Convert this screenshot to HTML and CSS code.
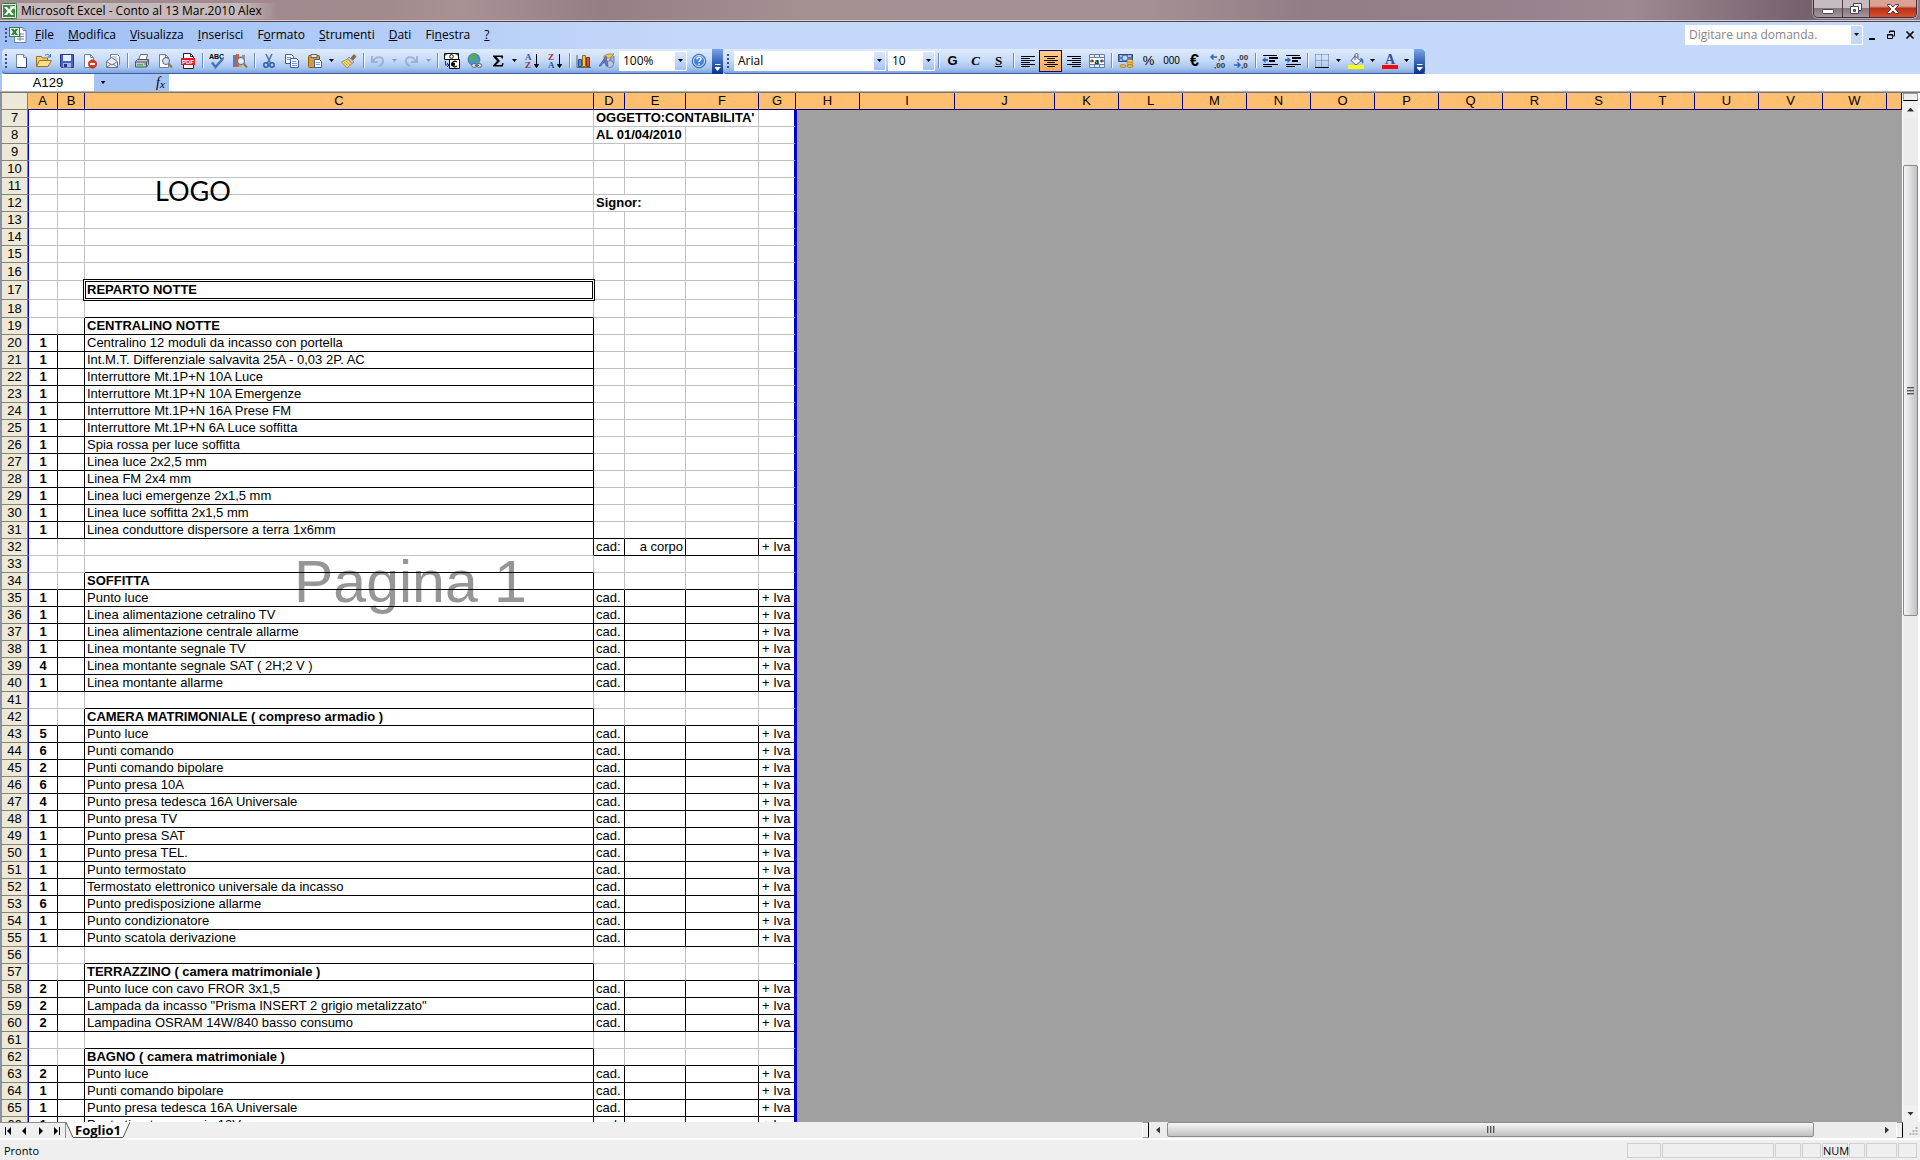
FILE: index.html
```html
<!DOCTYPE html>
<html lang="it">
<head>
<meta charset="utf-8">
<title>Microsoft Excel - Conto al 13 Mar.2010 Alex</title>
<link rel="stylesheet" href="styles.css">
</head>
<body>
<header class="titlebar">
  <svg class="app-icon" viewBox="0 0 16 16"><rect x=".5" y=".5" width="15" height="15" rx="1" fill="#e4f0e0" stroke="#2f7a3a"/><rect x="2" y="2" width="12" height="12" fill="#3c8a44"/><path d="M3 4h3l2 2.500 2-2.500h3L9.500 8l3.500 4h-3L8 9.500 6 12H3l3.500-4z" fill="#fff"/><path d="M9 3h5v3H9z" fill="#b9dcae"/><path d="M9 6l3-3h2l-4 5z" fill="#fff"/></svg>
  <h1>Microsoft Excel - Conto al 13 Mar.2010 Alex</h1>
  <div class="window-buttons">
    <button class="win-min" aria-label="Riduci a icona"><svg width="14" height="12" viewBox="0 0 14 12"><rect x="1.500" y="6.500" width="11" height="4" rx="1" fill="#fff" stroke="#4b4350"/></svg></button>
    <button class="win-restore" aria-label="Ripristina"><svg width="14" height="13" viewBox="0 0 14 13"><path d="M4.500 1.500h8v7h-8z" fill="#eee" stroke="#4b4350"/><path d="M1.500 4.500h8v7h-8z" fill="#fff" stroke="#4b4350"/><path d="M4.500 7.500h2v2h-2z" fill="#8a7d86" stroke="#4b4350"/></svg></button>
    <button class="win-close" aria-label="Chiudi"><svg width="14" height="12" viewBox="0 0 14 12"><path d="M1.500 1.500h3L7 4l2.500-2.500h3v1L9 6l3.500 3.500v1h-3L7 8l-2.500 2.500h-3v-1L5 6 1.500 2.500z" fill="#fff" stroke="#5b3338"/></svg></button>
  </div>
</header>

<nav class="menubar">
  <i class="grip"></i>
  <svg class="doc-icon" viewBox="0 0 18 18"><path d="M7 1.500h7l3 3v12H5.500V9" fill="#fff" stroke="#6782b8"/><path d="M14 1.500v3h3M8 8h7M8 10.500h7M8 13h7M11 7v8" fill="none" stroke="#6782b8"/><rect x=".5" y="1.500" width="10" height="9" fill="#e1f0dc" stroke="#2e7d3b"/><path d="M2 3h2.500l1 1.500L6.500 3H9L6.800 6 9 9H6.500l-1-1.500L4.500 9H2l2.200-3z" fill="#2e7d3b"/></svg>
  <ul class="menus">
    <li><button><u>F</u>ile</button></li><li><button><u>M</u>odifica</button></li><li><button><u>V</u>isualizza</button></li><li><button><u>I</u>nserisci</button></li><li><button>F<u>o</u>rmato</button></li><li><button><u>S</u>trumenti</button></li><li><button><u>D</u>ati</button></li><li><button>Fi<u>n</u>estra</button></li><li><button><u>?</u></button></li>
  </ul>
  <div class="combo ask"><input type="text" placeholder="Digitare una domanda." aria-label="Digitare una domanda"><button aria-label="Elenco domande"><i class="tri"></i></button></div>
  <div class="doc-buttons">
    <button aria-label="Riduci cartella"><svg viewBox="0 0 10 10"><path d="M2 8h6v2H2z"/></svg></button>
    <button aria-label="Ripristina cartella"><svg viewBox="0 0 10 10"><path d="M3.500 3V1h5v5H7M3 1.500h6M1.500 4.500h5v4h-5zM1 5h6" fill="none" stroke="#000"/></svg></button>
    <button aria-label="Chiudi cartella"><svg viewBox="0 0 10 10"><path d="M1.500 1.500l7 7m0-7l-7 7" fill="none" stroke="#000" stroke-width="1.600"/></svg></button>
  </div>
</nav>

<div class="toolbars">
  <div class="toolbar" role="toolbar" aria-label="Standard">
    <i class="grip"></i>
    <button aria-label="Nuovo"><svg viewBox="0 0 16 16"><path d="M3.500 1.500h7l3 3v10h-10z" fill="#fff" stroke="#7186ad"/><path d="M10.500 1.500v3h3" fill="#d5e2f7" stroke="#7186ad"/><path d="M13.500 5v9.500h-10" fill="none" stroke="#2c4370"/></svg></button>
    <button aria-label="Apri"><svg viewBox="0 0 16 16"><path d="M.5 13.500v-10h5l1 1.500h5v3" fill="#f4cf70" stroke="#9c6e1e"/><path d="M.5 13.500l3-6h12l-3.500 6z" fill="#ffe08a" stroke="#9c6e1e"/><path d="M9 2.500c2-2 4-1 5 1M14.500 1v3h-3" fill="none" stroke="#3f64a8"/></svg></button>
    <button aria-label="Salva"><svg viewBox="0 0 16 16"><path d="M1.500 1.500h13v13h-12l-1-1z" fill="#4e5fc4" stroke="#2b3584"/><path d="M4 2h8v6H4z" fill="#e9f0ff"/><path d="M4 10h8v4.500H4z" fill="#a9b6de"/><path d="M5 11h3v3H5z" fill="#2b3584"/></svg></button>
    <button aria-label="Autorizzazione"><svg viewBox="0 0 16 16"><path d="M2.500 1.500h6l3 3v10h-9z" fill="#fff" stroke="#6d7fa5"/><path d="M8.500 1.500v3h3" fill="none" stroke="#6d7fa5"/><circle cx="10.500" cy="11" r="4.200" fill="#de3b20" stroke="#a32411" stroke-width=".6"/><path d="M8 10h5v2H8z" fill="#fff"/></svg></button>
    <button aria-label="Posta elettronica"><svg viewBox="0 0 16 16"><path d="M5.500 6V1.500h7l2 2V12" fill="#fff" stroke="#6d7fa5"/><path d="M7 4h5M7 6h6" stroke="#9aa9c8"/><path d="M1.500 8.500l5-4 6 4v6h-11z" fill="#e7ecf5" stroke="#6d7485"/><path d="M1.500 8.500l5.500 3.500 5.500-3.500M1.500 14.500L6 11M12.500 14.500L8 11" fill="none" stroke="#6d7485"/></svg></button>
    <i class="sep"></i>
    <button aria-label="Stampa"><svg viewBox="0 0 16 16"><path d="M4.500 7l2-5.500h7L12 7z" fill="#fff" stroke="#5d6a80"/><path d="M1.500 8.500l2-2h11v5l-2 2.500h-11z" fill="#c4c9d1" stroke="#4c5564"/><path d="M1.500 9h11v5M12.500 9l2-2" fill="none" stroke="#4c5564"/><path d="M3 11h6v1.500H3z" fill="#4b5"/><path d="M10 10.500h2v1h-2z" fill="#2a3"/></svg></button>
    <button aria-label="Anteprima di stampa"><svg viewBox="0 0 16 16"><path d="M2.500 1.500h6l3 3v10h-9z" fill="#fff" stroke="#6d7fa5"/><path d="M8.500 1.500v3h3" fill="none" stroke="#6d7fa5"/><circle cx="9" cy="8" r="3.500" fill="#cfe2f4" stroke="#5b6a80"/><path d="M11.500 10.500l3.500 4" stroke="#8b7a4a" stroke-width="2"/></svg></button>
    <button aria-label="Converti in PDF"><svg viewBox="0 0 16 16"><path d="M3.500.5h7l3 3v12h-10z" fill="#fff" stroke="#222"/><path d="M10.500.5v3h3" fill="none" stroke="#222"/><path d="M1 5h14v7H1z" fill="#e41b17"/><text x="2" y="11" font-family="Liberation Sans, sans-serif" font-size="6" font-weight="700" fill="#fff">PDF</text></svg></button>
    <i class="sep"></i>
    <button aria-label="Controllo ortografia"><svg viewBox="0 0 16 16"><text x="0" y="6" font-family="Liberation Sans, sans-serif" font-size="7" font-weight="700">ABC</text><path d="M3 9.500l3.500 4.500L14 5.500" fill="none" stroke="#4672c4" stroke-width="2.500"/></svg></button>
    <button aria-label="Ricerche"><svg viewBox="0 0 16 16"><path d="M1 2h3v12H1z" fill="#4f7fd1"/><path d="M4 1h3v13H4z" fill="#c7663a"/><path d="M7 3h3v11H7z" fill="#e0ad3a"/><path d="M10 2h3v8h-3z" fill="#7a94c4"/><circle cx="9" cy="8" r="3.500" fill="#e3eefa" stroke="#596a85"/><path d="M11.500 10.500l3.500 4" stroke="#8b7a4a" stroke-width="2"/></svg></button>
    <i class="sep"></i>
    <button aria-label="Taglia"><svg viewBox="0 0 16 16"><path d="M5 1l5 10M11 1L6 11" fill="none" stroke="#5672a3" stroke-width="1.600"/><circle cx="5" cy="12" r="2.200" fill="none" stroke="#2e5bb0" stroke-width="1.500"/><circle cx="11" cy="12" r="2.200" fill="none" stroke="#2e5bb0" stroke-width="1.500"/></svg></button>
    <button aria-label="Copia"><svg viewBox="0 0 16 16"><path d="M1.500 1.500h6l2 2v7h-8z" fill="#fff" stroke="#3d5fa6"/><path d="M3 4.500h4M3 6.500h4" stroke="#7e9bd4"/><path d="M6.500 5.500h6l2 2v7h-8z" fill="#fff" stroke="#3d5fa6"/><path d="M8 8.500h4M8 10.500h5M8 12.500h5" stroke="#7e9bd4"/></svg></button>
    <button aria-label="Incolla"><svg viewBox="0 0 16 16"><rect x="1.500" y="2.500" width="11" height="12" rx="1" fill="#d9983a" stroke="#8a5a16"/><path d="M4 1.500h6v3H4z" fill="#e6e6e6" stroke="#666"/><path d="M7.500 6.500h5l2 2v6h-7z" fill="#fff" stroke="#3d5fa6"/><path d="M9 9.500h4M9 11.500h4" stroke="#7e9bd4"/></svg></button>
    <button class="drop" aria-label="Opzioni incolla"><i class="tri"></i></button>
    <button aria-label="Copia formato"><svg viewBox="0 0 16 16"><path d="M10 5l3-3.500 2 2L12 7z" fill="#8a6d3c" stroke="#5e4a25" stroke-width=".6"/><path d="M8 4l5 5-2 1.500L6.500 6z" fill="#c9ccd6" stroke="#666" stroke-width=".6"/><path d="M6.500 6L11 10.500 6 15 .500 9z" fill="#f3d772" stroke="#9d8130" stroke-width=".8"/><path d="M3 9l4 4M5 8l4 4" stroke="#b7963b" stroke-width=".7"/></svg></button>
    <i class="sep"></i>
    <button disabled aria-label="Annulla"><svg viewBox="0 0 16 16"><path d="M2 3v6h6" fill="none" stroke="#93a9cf" stroke-width="2"/><path d="M3 8c3-5 10-5 10 0 0 2-1 4-4 5" fill="none" stroke="#93a9cf" stroke-width="2"/></svg></button>
    <button class="drop" disabled aria-label="Elenco annulla"><i class="tri"></i></button>
    <button disabled aria-label="Ripeti"><svg viewBox="0 0 16 16"><path d="M13 3v6H7" fill="none" stroke="#93a9cf" stroke-width="2"/><path d="M12 8C9 3 2 3 2 8c0 2 1 4 4 5" fill="none" stroke="#93a9cf" stroke-width="2"/></svg></button>
    <button class="drop" disabled aria-label="Elenco ripeti"><i class="tri"></i></button>
    <i class="sep"></i>
    <button aria-label="Conversione in euro"><svg viewBox="0 0 16 16"><path d="M.5.5h14v6H.5z" fill="#fff" stroke="#000"/><path d="M1 1h3L1 3zM14 1h-3l3 2z" fill="#159a3a"/><circle cx="7.500" cy="3.500" r="1.800" fill="none" stroke="#000"/><path d="M5.500 6.500h10v9h-10z" fill="#fff" stroke="#000"/><path d="M13 9c-3-2-5 0-5 2s2 4 5 2M7 10.500h4M7 12h4" fill="none" stroke="#000" stroke-width="1.300"/><path d="M1.500 8v4h3M3 10l2 2-2 2" fill="none" stroke="#1522b4"/></svg></button>
    <button aria-label="Inserisci collegamento"><svg viewBox="0 0 16 16"><circle cx="7" cy="6.500" r="6" fill="#4d8fdb" stroke="#3a679f" stroke-width=".7"/><path d="M3 3c3-3 6-2 7 0s-3 2-3 4-3 2-4 0-1-3 0-4zM9 8c2-1 3-1 3 0s-1 3-2 3z" fill="#4eb04a"/><rect x="4.700" y="10.700" width="5" height="3.600" rx="1.800" fill="#dfe3ea" stroke="#596273"/><rect x="9.700" y="10.700" width="5" height="3.600" rx="1.800" fill="#dfe3ea" stroke="#596273"/><path d="M8 12.500h4" stroke="#596273"/></svg></button>
    <button aria-label="Somma automatica"><svg viewBox="0 0 16 16"><path d="M3 2.500h10v3h-1l-1-1.500H6.500L10 8l-4 4h5.500l1-2h1l-.5 3.500H3v-1L7 8 3 3.500z"/></svg></button>
    <button class="drop" aria-label="Altre funzioni"><i class="tri"></i></button>
    <button aria-label="Ordinamento crescente"><svg viewBox="0 0 16 16"><text x="1" y="7" font-family="Liberation Serif, serif" font-size="9" font-weight="700" fill="#2f55a4">A</text><text x="1" y="15" font-family="Liberation Serif, serif" font-size="9" font-weight="700" fill="#a33036">Z</text><path d="M12.500 1v12M10.500 11.500l2 3 2-3z" stroke="#000"/></svg></button>
    <button aria-label="Ordinamento decrescente"><svg viewBox="0 0 16 16"><text x="1" y="7" font-family="Liberation Serif, serif" font-size="9" font-weight="700" fill="#a33036">Z</text><text x="1" y="15" font-family="Liberation Serif, serif" font-size="9" font-weight="700" fill="#2f55a4">A</text><path d="M12.500 1v12M10.500 11.500l2 3 2-3z" stroke="#000"/></svg></button>
    <i class="sep"></i>
    <button aria-label="Creazione guidata Grafico"><svg viewBox="0 0 16 16"><path d="M1 2v12.500h14" fill="none" stroke="#566"/><path d="M2.500 6.500h3v7h-3z" fill="#5b8ade" stroke="#27509c"/><path d="M6.500 2.500h3v11h-3z" fill="#f2c63c" stroke="#92701a"/><path d="M10.500 4.500h3v9h-3z" fill="#d9512d" stroke="#842a12"/></svg></button>
    <button aria-label="Disegno"><svg viewBox="0 0 16 16"><path d="M5 3l4-2h6l-4 4H5z" fill="#f0c862" stroke="#94702a" stroke-width=".7"/><path d="M11 6l4-3v7l-4 3z" fill="#a8b5cc" stroke="#566582" stroke-width=".7"/><circle cx="11" cy="11" r="3.500" fill="#bcc8de" stroke="#566582" stroke-width=".7"/><path d="M0 13L7 3l2 10H7l-.5-3H4l-2 3zM5 8.500h1.500L6 6.500z" fill="#6f82c9" stroke="#364a92" stroke-width=".6"/></svg></button>
    <div class="combo zoom"><input type="text" value="100%" aria-label="Zoom"><button aria-label="Elenco zoom"><i class="tri"></i></button></div>
    <button aria-label="Guida"><svg viewBox="0 0 16 16"><circle cx="8" cy="8" r="6.800" fill="#3f7fe0" stroke="#2a5cb5" stroke-width=".8"/><circle cx="8" cy="8" r="5.500" fill="none" stroke="#dfeaff"/><path d="M6 6.500c0-3 4-3 4-.5 0 1.500-2 1.500-2 3M8 10.500v1.500" fill="none" stroke="#fff" stroke-width="1.500"/></svg></button>
    <button class="overflow" aria-label="Opzioni barra Standard"><i></i></button>
  </div>
  <div class="toolbar formatting" role="toolbar" aria-label="Formattazione">
    <i class="grip"></i>
    <div class="combo font"><input type="text" value="Arial" aria-label="Tipo di carattere"><button aria-label="Elenco caratteri"><i class="tri"></i></button></div>
    <div class="combo size"><input type="text" value="10" aria-label="Dimensione carattere"><button aria-label="Elenco dimensioni"><i class="tri"></i></button></div>
    <i class="sep"></i>
    <button class="letter bold" aria-label="Grassetto">G</button>
    <button class="letter italic" aria-label="Corsivo">C</button>
    <button class="letter under" aria-label="Sottolineato">S</button>
    <i class="sep"></i>
    <button aria-label="Allinea a sinistra"><svg viewBox="0 0 16 16"><path d="M1 3.500h14M1 5.500h9M1 7.500h14M1 9.500h9M1 11.500h14M1 13.500h9" stroke="#000"/></svg></button>
    <button class="pressed" aria-label="Allinea al centro"><svg viewBox="0 0 16 16"><path d="M1 3.500h14M4 5.500h8M1 7.500h14M4 9.500h8M1 11.500h14M4 13.500h8" stroke="#000"/></svg></button>
    <button aria-label="Allinea a destra"><svg viewBox="0 0 16 16"><path d="M1 3.500h14M6 5.500h9M1 7.500h14M6 9.500h9M1 11.500h14M6 13.500h9" stroke="#000"/></svg></button>
    <button aria-label="Unisci e centra"><svg viewBox="0 0 16 16"><path d="M.5 1.500h15v13H.5zM.5 4.500h15M.5 11.500h15M5.500 1v3M10.500 1v3M5.500 12v3M10.500 12v3" fill="#dce8fb" stroke="#6b7f9f"/><path d="M1 5h14v6H1z" fill="#fff"/><path d="M1 8h3M3 6.500L4.500 8 3 9.500M15 8h-3M13 6.500L11.500 8 13 9.500" fill="none" stroke="#000"/><text x="5.500" y="10.500" font-family="Liberation Serif, serif" font-size="9" font-weight="700">a</text></svg></button>
    <i class="sep"></i>
    <button aria-label="Valuta"><svg viewBox="0 0 16 16"><path d="M.5 1.500h14v7H.5z" fill="#5878bd" stroke="#2f4b87"/><circle cx="7" cy="5" r="2.300" fill="#c3d2ef"/><path d="M2 3h2M10 3h3M2 7h2" stroke="#fff"/><ellipse cx="12" cy="8" rx="3" ry="1.500" fill="#ffd86b" stroke="#a87313" stroke-width=".7"/><ellipse cx="12" cy="10.500" rx="3" ry="1.500" fill="#f5bd3d" stroke="#a87313" stroke-width=".7"/><ellipse cx="12" cy="13" rx="3" ry="1.500" fill="#f5bd3d" stroke="#a87313" stroke-width=".7"/><ellipse cx="5" cy="13" rx="3" ry="1.500" fill="#f5bd3d" stroke="#a87313" stroke-width=".7"/></svg></button>
    <button class="letter plain" aria-label="Stile percentuale">%</button>
    <button class="letter zeros" aria-label="Stile separatore">000</button>
    <button class="letter euro" aria-label="Euro">€</button>
    <button aria-label="Aumenta decimali"><svg viewBox="0 0 16 16"><path d="M1 4h6M3.500 1.500L1 4l2.500 2.500" fill="none" stroke="#3563bd" stroke-width="1.500"/><text x="8" y="7" font-family="Liberation Sans, sans-serif" font-size="8" font-weight="700" fill="#333">,0</text><text x="4" y="15" font-family="Liberation Sans, sans-serif" font-size="8" font-weight="700" fill="#333">,00</text></svg></button>
    <button aria-label="Diminuisci decimali"><svg viewBox="0 0 16 16"><text x="4" y="7" font-family="Liberation Sans, sans-serif" font-size="8" font-weight="700" fill="#333">,00</text><path d="M1 12h6M4.500 9.500L7 12l-2.500 2.500" fill="none" stroke="#3563bd" stroke-width="1.500"/><text x="8" y="15" font-family="Liberation Sans, sans-serif" font-size="8" font-weight="700" fill="#333">,0</text></svg></button>
    <i class="sep"></i>
    <button aria-label="Riduci rientro"><svg viewBox="0 0 16 16"><path d="M1 2.500h14M7 5.500h9M7 8.500h6M1 11.500h15M1 13.500h9" stroke="#000"/><path d="M7 4.500h9M7 7.500h6" stroke="#000"/><path d="M0 7l3.500-3v2H6v2H3.500v2z" fill="#3563bd"/></svg></button>
    <button aria-label="Aumenta rientro"><svg viewBox="0 0 16 16"><path d="M1 2.500h14M7 5.500h9M7 8.500h6M1 11.500h15M1 13.500h9" stroke="#000"/><path d="M7 4.500h9M7 7.500h6" stroke="#000"/><path d="M6 7L2.500 4v2H0v2h2.500v2z" fill="#3563bd"/></svg></button>
    <i class="sep"></i>
    <button aria-label="Bordi"><svg viewBox="0 0 16 16"><path d="M1.500 1.500h13M1.500 7.500h13M1.500 1.500V14M7.500 1.500V14M14.500 1.500V14" fill="none" stroke="#6b7686" stroke-dasharray="1 1"/><path d="M1 14.500h14" stroke="#000"/></svg></button>
    <button class="drop" aria-label="Elenco bordi"><i class="tri"></i></button>
    <button aria-label="Colore riempimento"><svg viewBox="0 0 16 16"><path d="M7 3l6 5-5 4-5-4.500z" fill="#e9eef7" stroke="#55617a"/><path d="M7 7V2c0-2 3-2 3 0v3" fill="none" stroke="#55617a"/><path d="M12 5c3 0 4 2 3 6l-2-3z" fill="#3c6cc6"/><path d="M0 12h16v4H0z" fill="#ff0"/></svg></button>
    <button class="drop" aria-label="Elenco colori riempimento"><i class="tri"></i></button>
    <button aria-label="Colore carattere"><svg viewBox="0 0 16 16"><text x="3" y="11" font-family="Liberation Serif, serif" font-size="14" font-weight="700" fill="#31519b">A</text><path d="M0 12h16v4H0z" fill="#f00"/></svg></button>
    <button class="drop" aria-label="Elenco colori carattere"><i class="tri"></i></button>
    <button class="overflow end" aria-label="Opzioni barra Formattazione"><i></i></button>
  </div>
</div>

<div class="formula-bar">
  <input class="name-box" type="text" value="A129" aria-label="Casella nome">
  <button class="name-drop" aria-label="Elenco nomi"><i class="tri"></i></button>
  <button class="fx" aria-label="Inserisci funzione">f<small>x</small></button>
  <input class="formula" type="text" aria-label="Barra della formula">
</div>

<main class="workbook">
<div class="sheet">
<div class="page-label">Pagina 1</div>
<div class="logo">LOGO</div>
<table class="grid">
<colgroup><col class="w-num"><col class="w-a"><col class="w-b"><col class="w-c"><col class="w-d"><col class="w-e"><col class="w-f"><col class="w-g"><col class="w-std"><col class="w-i"><col class="w-j"><col class="w-std" span="13"><col></colgroup>
<thead><tr><th class="corner"><th>A<th>B<th>C<th>D<th>E<th>F<th>G<th>H<th>I<th>J<th>K<th>L<th>M<th>N<th>O<th>P<th>Q<th>R<th>S<th>T<th>U<th>V<th>W<th></tr></thead>
<tbody>
<tr><th>7<td><td><td><td colspan="3"><b>OGGETTO:CONTABILITA'</b><td><td colspan="17">
<tr><th>8<td><td><td><td colspan="2"><b>AL 01/04/2010</b><td><td><td colspan="17">
<tr><th>9<td><td><td><td><td><td><td><td colspan="17">
<tr><th>10<td><td><td><td><td><td><td><td colspan="17">
<tr><th>11<td><td><td><td><td><td><td><td colspan="17">
<tr><th>12<td><td><td><td colspan="2"><b>Signor:</b><td><td><td colspan="17">
<tr><th>13<td><td><td><td><td><td><td><td colspan="17">
<tr><th>14<td><td><td><td><td><td><td><td colspan="17">
<tr><th>15<td><td><td><td><td><td><td><td colspan="17">
<tr class="tall"><th>16<td><td><td><td><td><td><td><td colspan="17">
<tr class="section"><th>17<td><td><td>REPARTO NOTTE<td><td><td><td><td colspan="17">
<tr class="tall above"><th>18<td><td><td><td><td><td><td><td colspan="17">
<tr class="head part"><th>19<td><td><td>CENTRALINO NOTTE<td><td><td><td><td colspan="17">
<tr class="part"><th>20<td>1<td><td>Centralino 12 moduli da incasso con portella<td><td><td><td><td colspan="17">
<tr class="part"><th>21<td>1<td><td>Int.M.T. Differenziale salvavita 25A - 0,03 2P. AC<td><td><td><td><td colspan="17">
<tr class="part"><th>22<td>1<td><td>Interruttore Mt.1P+N 10A Luce<td><td><td><td><td colspan="17">
<tr class="part"><th>23<td>1<td><td>Interruttore Mt.1P+N 10A Emergenze<td><td><td><td><td colspan="17">
<tr class="part"><th>24<td>1<td><td>Interruttore Mt.1P+N 16A Prese FM<td><td><td><td><td colspan="17">
<tr class="part"><th>25<td>1<td><td>Interruttore Mt.1P+N 6A Luce soffitta<td><td><td><td><td colspan="17">
<tr class="part"><th>26<td>1<td><td>Spia rossa per luce soffitta<td><td><td><td><td colspan="17">
<tr class="part"><th>27<td>1<td><td>Linea luce 2x2,5 mm<td><td><td><td><td colspan="17">
<tr class="part"><th>28<td>1<td><td>Linea FM 2x4 mm<td><td><td><td><td colspan="17">
<tr class="part"><th>29<td>1<td><td>Linea luci emergenze 2x1,5 mm<td><td><td><td><td colspan="17">
<tr class="part"><th>30<td>1<td><td>Linea luce soffitta 2x1,5 mm<td><td><td><td><td colspan="17">
<tr class="part last"><th>31<td>1<td><td>Linea conduttore dispersore a terra 1x6mm<td><td><td><td><td colspan="17">
<tr class="total"><th>32<td><td><td><td>cad:<td class="right">a corpo<td><td>+ Iva<td colspan="17">
<tr class="above"><th>33<td><td><td><td><td><td><td><td colspan="17">
<tr class="head"><th>34<td><td><td>SOFFITTA<td><td><td><td><td colspan="17">
<tr class="item"><th>35<td>1<td><td>Punto luce<td>cad.<td><td><td>+ Iva<td colspan="17">
<tr class="item"><th>36<td>1<td><td>Linea alimentazione cetralino TV<td>cad.<td><td><td>+ Iva<td colspan="17">
<tr class="item"><th>37<td>1<td><td>Linea alimentazione centrale allarme<td>cad.<td><td><td>+ Iva<td colspan="17">
<tr class="item"><th>38<td>1<td><td>Linea montante segnale TV<td>cad.<td><td><td>+ Iva<td colspan="17">
<tr class="item"><th>39<td>4<td><td>Linea montante segnale SAT ( 2H;2 V )<td>cad.<td><td><td>+ Iva<td colspan="17">
<tr class="item"><th>40<td>1<td><td>Linea montante allarme<td>cad.<td><td><td>+ Iva<td colspan="17">
<tr class="above"><th>41<td><td><td><td><td><td><td><td colspan="17">
<tr class="head"><th>42<td><td><td>CAMERA MATRIMONIALE ( compreso armadio )<td><td><td><td><td colspan="17">
<tr class="item"><th>43<td>5<td><td>Punto luce<td>cad.<td><td><td>+ Iva<td colspan="17">
<tr class="item"><th>44<td>6<td><td>Punti comando<td>cad.<td><td><td>+ Iva<td colspan="17">
<tr class="item"><th>45<td>2<td><td>Punti comando bipolare<td>cad.<td><td><td>+ Iva<td colspan="17">
<tr class="item"><th>46<td>6<td><td>Punto presa 10A<td>cad.<td><td><td>+ Iva<td colspan="17">
<tr class="item"><th>47<td>4<td><td>Punto presa tedesca 16A Universale<td>cad.<td><td><td>+ Iva<td colspan="17">
<tr class="item"><th>48<td>1<td><td>Punto presa TV<td>cad.<td><td><td>+ Iva<td colspan="17">
<tr class="item"><th>49<td>1<td><td>Punto presa SAT<td>cad.<td><td><td>+ Iva<td colspan="17">
<tr class="item"><th>50<td>1<td><td>Punto presa TEL.<td>cad.<td><td><td>+ Iva<td colspan="17">
<tr class="item"><th>51<td>1<td><td>Punto termostato<td>cad.<td><td><td>+ Iva<td colspan="17">
<tr class="item"><th>52<td>1<td><td>Termostato elettronico universale da incasso<td>cad.<td><td><td>+ Iva<td colspan="17">
<tr class="item"><th>53<td>6<td><td>Punto predisposizione allarme<td>cad.<td><td><td>+ Iva<td colspan="17">
<tr class="item"><th>54<td>1<td><td>Punto condizionatore<td>cad.<td><td><td>+ Iva<td colspan="17">
<tr class="item"><th>55<td>1<td><td>Punto scatola derivazione<td>cad.<td><td><td>+ Iva<td colspan="17">
<tr class="above"><th>56<td><td><td><td><td><td><td><td colspan="17">
<tr class="head"><th>57<td><td><td>TERRAZZINO ( camera matrimoniale )<td><td><td><td><td colspan="17">
<tr class="item"><th>58<td>2<td><td>Punto luce con cavo FROR 3x1,5<td>cad.<td><td><td>+ Iva<td colspan="17">
<tr class="item"><th>59<td>2<td><td>Lampada da incasso "Prisma INSERT 2 grigio metalizzato"<td>cad.<td><td><td>+ Iva<td colspan="17">
<tr class="item"><th>60<td>2<td><td>Lampadina OSRAM 14W/840 basso consumo<td>cad.<td><td><td>+ Iva<td colspan="17">
<tr class="above"><th>61<td><td><td><td><td><td><td><td colspan="17">
<tr class="head"><th>62<td><td><td>BAGNO ( camera matrimoniale )<td><td><td><td><td colspan="17">
<tr class="item"><th>63<td>2<td><td>Punto luce<td>cad.<td><td><td>+ Iva<td colspan="17">
<tr class="item"><th>64<td>1<td><td>Punti comando bipolare<td>cad.<td><td><td>+ Iva<td colspan="17">
<tr class="item"><th>65<td>1<td><td>Punto presa tedesca 16A Universale<td>cad.<td><td><td>+ Iva<td colspan="17">
<tr class="item"><th>66<td>1<td><td>Punto tirante suoneria 12V<td>cad.<td><td><td>+ Iva<td colspan="17">
</tbody>
</table>
</div>
<div class="vscroll">
  <i class="split"></i>
  <button aria-label="Scorri su"><i class="arrow up"></i></button>
  <div class="track"><div class="thumb"><i></i><i></i><i></i></div></div>
  <button aria-label="Scorri giù"><i class="arrow down"></i></button>
</div>
</main>

<div class="tabs-row">
  <div class="tab-nav">
    <button aria-label="Primo foglio"><svg viewBox="0 0 8 8"><path d="M1 0h1v8H1zM7 0v8L3 4z"/></svg></button>
    <button aria-label="Foglio precedente"><svg viewBox="0 0 8 8"><path d="M6 0v8L2 4z"/></svg></button>
    <button aria-label="Foglio successivo"><svg viewBox="0 0 8 8"><path d="M2 0v8l4-4z"/></svg></button>
    <button aria-label="Ultimo foglio"><svg viewBox="0 0 8 8"><path d="M6 0h1v8H6zM1 0v8l4-4z"/></svg></button>
  </div>
  <button class="tab"><svg viewBox="0 0 64 16" preserveAspectRatio="none"><path d="M0 0l7 15.500h50L64 0z" fill="#fff"/><path d="M0 0l7 15.500h50L64 0" fill="none" stroke="#555"/></svg><span>Foglio1</span></button>
  <div class="hscroll">
    <i class="split"></i>
    <button aria-label="Scorri a sinistra"><i class="arrow left"></i></button>
    <div class="track"><div class="thumb"><i></i><i></i><i></i></div></div>
    <button aria-label="Scorri a destra"><i class="arrow rightward"></i></button>
    <i class="split"></i>
  </div>
  <svg class="size-grip" viewBox="0 0 16 16"><path d="M12 5h2v2h-2zM9 8h2v2H9zM12 8h2v2h-2zM6 11h2v2H6zM9 11h2v2H9zM12 11h2v2h-2z" fill="#b8b8b8"/></svg>
</div>
<footer class="status">
  <span class="ready">Pronto</span>
  <span class="cell s1"></span><span class="cell s2"></span><span class="cell s3"></span><span class="cell s4"></span><span class="cell s3">NUM</span><span class="cell s5"></span><span class="cell s6"></span><span class="cell s4"></span>
</footer>
</body>
</html>
```
FILE: styles.css
```css
* { box-sizing: border-box; }
html, body { height: 100%; }
body {
  margin: 0;
  display: flex;
  flex-direction: column;
  overflow: hidden;
  background: #efefef;
  font: 12px "Open Sans", "Noto Sans", sans-serif;
  color: #000;
}
button, input { font: inherit; color: inherit; border: 0; padding: 0; margin: 0; background: none; border-radius: 0; min-width: 0; }
button { display: flex; align-items: center; justify-content: center; flex: none; }
input { outline: 0; }

.titlebar {
  flex: none;
  height: 22px;
  display: flex;
  align-items: flex-start;
  padding: 3px 3px 0 1px;
  border-bottom: 1px solid #50444c;
  box-shadow: inset 0 -1px #d8cdd2;
  background: linear-gradient(90deg, #a08c90 0, #a08a8c 380px, #a99294 460px, #957f84 600px, #a48f91 800px, #a48f93 60%, #917d86 68%, #97838f 80%, #9c8994 85%, #75616d 94%, #8d7984 100%);
}
.app-icon { width: 16px; height: 16px; flex: none; }
.titlebar h1 {
  margin: 0;
  padding: 0 16px 0 4px;
  font-size: 12px;
  line-height: 16px;
  font-weight: 400;
  white-space: nowrap;
  background: linear-gradient(90deg, rgba(255,255,255,.4) 85%, rgba(255,255,255,0));
}
.window-buttons { display: flex; margin: -3px 0 0 auto; height: 18px; border: 1px solid #3a2f38; border-top: 0; border-radius: 0 0 5px 5px; overflow: hidden; box-shadow: 0 0 0 1px rgba(255,255,255,.4); }
.window-buttons button { height: 17px; background: linear-gradient(#c5bbc1 0 45%, #85757f 50%, #a597a1); }
.win-min { width: 28px; }
.window-buttons .win-restore { width: 28px; border: solid #4b4049; border-width: 0 1px; }
.window-buttons .win-close { width: 46px; background: linear-gradient(#d9a295 0 35%, #b8301a 50%, #d4512d); }

.menubar {
  flex: none;
  height: 27px;
  display: flex;
  align-items: center;
  padding: 0 4px 2px 5px;
  background: linear-gradient(90deg, #9ebef5, #c4d9f9 700px);
}
.grip { flex: none; width: 2px; height: 14px; background: repeating-linear-gradient(#34518f 0 2px, transparent 2px 4px); }
.doc-icon { width: 18px; height: 18px; margin-left: 2px; }
.menus { display: flex; gap: 14px; list-style: none; margin: 0; padding: 0 0 0 8px; }
.menus button { line-height: 18px; }
.combo { display: flex; flex: none; background: #fff; border: 1px solid #fff; }
.combo input { flex: 1; width: 0; padding-left: 3px; background: #fff; }
.combo button { background: linear-gradient(#dce9fd, #a5c3f1); }
.tri { width: 5px; height: 3px; background: #000; clip-path: polygon(0 0, 100% 0, 50% 100%); }
.ask { width: 178px; margin-left: auto; }
.ask input::placeholder { color: #868686; opacity: 1; }
.ask button { width: 11px; background: #c4d9f9; }
.doc-buttons { display: flex; gap: 8px; padding: 0 1px 0 3px; }
.doc-buttons button { width: 11px; }
.doc-buttons svg { width: 10px; height: 10px; }

.toolbars { flex: none; display: flex; height: 25px; padding-left: 2px; background: linear-gradient(90deg, #9ebef5, #c4d9f9 700px); }
.toolbar {
  display: flex;
  align-items: center;
  height: 25px;
  padding: 0 0 1px 3px;
  border-radius: 4px 0 0 4px;
  border-bottom: 1px solid #3b619c;
  background: linear-gradient(#dfebfe, #c9dcf9 45%, #a6c3ef 80%, #7ba4e0);
}
.formatting { padding-left: 4px; }
.toolbar > .grip { margin-right: 2px; }
.toolbar > button { width: 23px; height: 22px; }
.toolbar > button svg { width: 16px; height: 16px; }
.toolbar > .drop { width: 11px; }
.toolbar > button:disabled { opacity: .8; }
.toolbar > button:disabled .tri { background: #7a8cae; }
.sep { flex: none; width: 6px; height: 15px; background: linear-gradient(90deg, transparent 3px, #6a8ccb 3px 4px, #f1f9ff 4px 5px, transparent 5px); }
.combo { height: 20px; }
.zoom { width: 68px; margin-left: 1px; }
.toolbar .combo button { width: 11px; }
.font { width: 152px; margin-left: 3px; }
.size { width: 47px; margin-left: 2px; }
.toolbar > .overflow {
  width: 11px;
  height: 25px;
  margin: 0 0 -2px 2px;
  align-items: flex-end;
  padding-bottom: 3px;
  background: linear-gradient(#7ba4ea, #3a67b5 50%, #0b2f86);
}
.toolbar > .end { border-radius: 0 4px 4px 0; }
.overflow i { width: 6px; height: 7px; background: linear-gradient(#fff 0 1px, transparent 1px 3px, #fff 3px); clip-path: polygon(0 0, 100% 0, 100% 50%, 50% 100%, 0 50%); }
.letter { font: 700 13px "Liberation Sans", Arial, sans-serif; }
.italic { font-family: "Liberation Serif", serif; font-style: italic; }
.under { font-family: "Liberation Serif", serif; text-decoration: underline; }
.plain { font-weight: 400; }
.zeros { font-size: 10px; font-weight: 400; }
.euro { font-size: 16px; }
.toolbar > .pressed { border: 1px solid #000080; background: linear-gradient(#ffd08c, #ffa955); }

.formula-bar { flex: none; height: 19px; display: flex; padding-left: 2px; background: #a6c3f5; border-bottom: 1px solid #777; box-shadow: inset 0 -1px #b0b0b0; font: 13px "Liberation Sans", Arial, sans-serif; }
.name-box { width: 92px; height: 17px; text-align: center; background: #fff; }
.name-drop { width: 18px; height: 17px; }
.fx { width: 57px; height: 17px; padding-left: 40px; font: italic 14px "Liberation Serif", serif; }
.fx small { font-size: 11px; padding-top: 3px; }
.formula { flex: 1; height: 17px; background: #fff; }

.workbook { flex: 1; min-height: 0; display: flex; }
.sheet { flex: 1; min-width: 0; position: relative; z-index: 0; overflow: hidden; border-left: 2px solid #8c93a3; background: linear-gradient(90deg, #fff 794px, #a0a0a0 794px); }
.page-label, .logo { position: absolute; white-space: nowrap; }
.page-label { z-index: -1; left: 292px; top: 455px; font: 59px/68px "Liberation Sans", Arial, sans-serif; color: #969696; }
.logo { left: 153px; top: 84px; font: 27px/28px Lato, sans-serif; }

.grid { width: 100%; table-layout: fixed; border-collapse: separate; border-spacing: 0; font: 13px/16px "Liberation Sans", Arial, sans-serif; }
.w-num { width: 26px; }
.w-a { width: 30px; }
.w-b { width: 27px; }
.w-c { width: 509px; }
.w-d { width: 31px; }
.w-e { width: 61px; }
.w-f { width: 73px; }
.w-g { width: 37px; }
.w-std { width: 64px; }
.w-i { width: 95px; }
.w-j { width: 100px; }
.grid th { padding: 0; font-weight: 400; text-align: center; }
.grid thead th { height: 17px; background: #ffbf6f; border: solid #000080; border-width: 0 1px 1px 0; }
.grid thead .corner { background: #ece9d8; border-color: #808068; }
.grid tbody th { background: #ece9d8; border: solid #848470; border-width: 0 1px 1px 0; }
.grid td { height: 17px; padding: 0 2px; border: solid #c0c0c0; border-width: 0 1px 1px 0; white-space: nowrap; }
.grid td:nth-child(2) { border-left: 1px solid #0000d0; text-align: center; font-weight: 700; }
.grid td:nth-last-child(2) { border-right: 2px solid #0000d0; padding-left: 3px; }
.grid td:last-child { border: 0; border-left: 1px solid #0000d0; background: #a0a0a0; }
.grid .tall td { height: 18px; }
.grid .section td { height: 19px; }
.section td:nth-child(4) { position: relative; font-weight: 700; }
.section td:nth-child(4)::after { content: ""; position: absolute; inset: -2px; border: 1px solid #000; box-shadow: inset 0 0 0 1px #fff, inset 0 0 0 2px #000; }
.above td:nth-child(4) { border-bottom-color: #000; }
.head td:nth-child(n+2):nth-child(-n+8) { border-bottom-color: #000; }
.head td:nth-child(3), .head td:nth-child(4) { border-right-color: #000; }
.head td:nth-child(4) { font-weight: 700; }
.head.part td:nth-child(n+5):nth-child(-n+8) { border-bottom-color: #c0c0c0; }
.part td:nth-child(n+2):nth-child(-n+4), .item td:nth-child(n+2):nth-child(-n+8) { border-bottom-color: #000; }
.part:not(.head) td:nth-child(2), .part td:nth-child(3), .part td:nth-child(4), .item td:nth-child(n+2):nth-child(-n+7) { border-right-color: #000; }
.last td:nth-child(n+5):nth-child(-n+8), .total td:nth-child(n+5):nth-child(-n+8) { border-bottom-color: #000; }
.total td:nth-child(n+4):nth-child(-n+7) { border-right-color: #000; }
.grid .right { text-align: right; }

.vscroll { flex: none; width: 18px; display: flex; flex-direction: column; background: #ececec; border: solid #fff; border-width: 0 2px 0 1px; }
.vscroll .split { height: 8px; background: #efefef; border: 1px solid #999; border-bottom: 1px solid #000; }
.vscroll button { height: 17px; background: #efefef; }
.track { flex: 1; display: flex; min-width: 0; }
.vscroll .track { flex-direction: column; padding-top: 47px; }
.thumb { display: flex; gap: 2px; align-items: center; justify-content: center; border: 1px solid #8b8b8b; border-radius: 2px; }
.vscroll .thumb { height: 48%; flex-direction: column; background: linear-gradient(90deg, #f6f6f6, #dcdcde 50%, #bfc0c4); }
.vscroll .thumb i { width: 7px; height: 1px; background: #555; box-shadow: 0 1px #aaa; }
.arrow { width: 7px; height: 4px; background: #333; }
.up { clip-path: polygon(50% 0, 100% 100%, 0 100%); }
.down { clip-path: polygon(0 0, 100% 0, 50% 100%); }
.left, .rightward { width: 4px; height: 7px; }
.left { clip-path: polygon(100% 0, 100% 100%, 0 50%); }
.rightward { clip-path: polygon(0 0, 100% 50%, 0 100%); }

.tabs-row { flex: none; height: 18px; display: flex; background: #efefef; border-bottom: 2px solid #fff; }
.tab-nav { display: flex; width: 66px; border: solid #8c8c8c; border-width: 1px 1px 0 0; }
.tab-nav button { flex: 1; }
.tab-nav svg { width: 8px; height: 8px; }
.tab { position: relative; width: 64px; height: 16px; font: 700 13px "Open Sans", sans-serif; }
.tab svg { position: absolute; inset: 0; width: 100%; height: 100%; }
.tab span { position: relative; line-height: 16px; }
.hscroll { width: calc(40% - 7px); display: flex; margin-left: auto; background: #ececec; }
.hscroll .split { width: 7px; border: 1px solid #999; border-left-color: #fff; border-right: 1px solid #000; background: #efefef; }
.hscroll button { width: 18px; }
.hscroll .thumb { width: 91%; height: 15px; background: linear-gradient(#f6f6f6, #dcdcde 50%, #bfc0c4); }
.hscroll .thumb i { width: 1px; height: 7px; background: #555; box-shadow: 1px 0 #aaa; }
.size-grip { flex: none; width: 17px; height: 16px; }

.status { flex: none; height: 20px; display: flex; align-items: center; gap: 1px; padding: 0 3px 0 4px; font-size: 11px; }
.ready { flex: 1; }
.cell { height: 15px; line-height: 13px; border: 1px solid #cfcfcf; text-align: center; }
.s1 { width: 34px; }
.s2 { width: 112px; }
.s3 { width: 26px; }
.s4 { width: 19px; }
.s5 { width: 16px; }
.s6 { width: 31px; }
```
